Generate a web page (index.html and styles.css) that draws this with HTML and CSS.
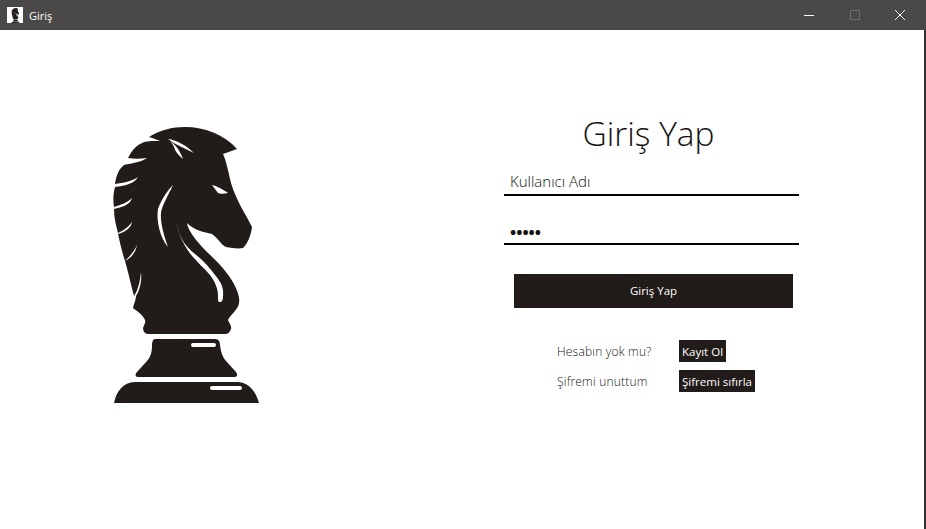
FILE: index.html
```html
<!DOCTYPE html>
<html lang="tr">
<head>
<meta charset="utf-8">
<title>Giriş</title>
<link rel="stylesheet" href="styles.css">
</head>
<body>
<svg class="defs" width="0" height="0" aria-hidden="true">
  <symbol id="knight" viewBox="113 127 146 276">
    <path class="ink" d="M149 137 C160 130 172 127 185 127 C205 127 225 135 237 149 L223 154 C226 160 228 170 231 183 C236 200 245 213 252 227 C251 235 248 243 243 248 C238 249 232 248 226 247 C221 245 218 238 212 234 C204 232 195 231 187 223 C188 232 200 245 208 253 C218 262 228 273 234 284 C238 292 240 298 239 303 C238 310 231 314 228 320 C229 323 232 326 231 329 C230 332 228 334 225 334 L148 334 C145 334 143 331 143 328 C144 325 146 323 145 320 C143 315 137 311 133 308 C134 303 136 300 136 296 C140 290 142 280 141 272 C140 282 138 290 134 296 C131 285 129 275 125 261 C131 258 136 252 137 245 C134 252 129 257 125 261 C122 252 120 243 118 234 C125 232 131 228 132 222 C128 228 122 231 118 233 C116 225 114 218 114 209 C122 207 130 205 132 198 C127 203 120 205 114 207 C113 200 113 195 115 187 C124 186 134 184 138 177 C132 181 123 183 115 184 C116 177 118 170 124 165 C132 163 142 162 147 158 C140 159 134 159 128 158 C132 150 137 145 142 143 C146 141 152 141 160 141 C156 139 152 138 149 137 Z"/>
    <path class="ink" d="M155 339 L215 339 C219 339 220 342 220 345 C221 352 222 356 226 361 L236 372 C238 375 237 377 234 377 L138 377 C135 377 135 374 137 372 L147 361 C151 356 152 352 152 345 C152 342 153 339 155 339 Z"/>
    <path class="ink" d="M114 403 C116 392 123 382 135 382 L237 382 C249 382 256 392 259 403 Z"/>
    <path class="shine" d="M176 221 C178 232 182 240 185 244 C191 252 197 255 202 260 C209 267 212 271 215 275 C221 282 224 288 223 296 C223 300 222 302 220 302 C218 302 218 300 218 296 C218 288 215 282 210 275 C204 268 198 263 193 257 C186 249 178 235 176 221 Z"/>
    <path class="shine" d="M173 185 C168 190 162 198 158 209 C156 220 160 238 168 247 C164 236 160 222 161 213 C162 205 169 194 173 185 Z"/>
    <path class="shine" d="M212 185 C217 186 224 190 228 193 C224 194 220 194 218 193 C216 190 214 188 212 185 Z"/>
    <path class="shine" d="M168 139 C176 140 186 145 194 153 C186 149 176 145 168 139 Z"/>
    <path class="shine" d="M170 141 C176 145 180 151 183 159 C178 155 175 151 174 147 C173 145 172 143 170 141 Z"/>
    <rect class="shine" x="191" y="343" width="25" height="4" rx="2"/>
    <rect class="shine" x="210" y="386" width="32" height="4" rx="2"/>
  </symbol>
</svg>
<div class="window">
  <header class="titlebar">
    <span class="app-icon"><svg class="app-knight"><use href="#knight"/></svg></span>
    <span class="app-title">Giriş</span>
    <div class="controls">
      <span class="control"><svg width="10" height="10" viewBox="0 0 10 10"><path class="glyph" d="M0 5.5H10"/></svg></span>
      <span class="control"><svg width="10" height="10" viewBox="0 0 10 10"><rect class="glyph-off" x="0.5" y="0.5" width="9" height="9"/></svg></span>
      <span class="control"><svg width="10" height="10" viewBox="0 0 10 10"><path class="glyph" d="M0 0L10 10M10 0L0 10"/></svg></span>
    </div>
  </header>
  <main class="main">
    <div class="hero"><svg class="hero-knight"><use href="#knight"/></svg></div>
    <form class="login">
      <h1 class="heading">Giriş Yap</h1>
      <input class="field" type="text" value="Kullanıcı Adı">
      <input class="field field-pass" type="password" value="12345">
      <button class="submit" type="button">Giriş Yap</button>
      <div class="links">
        <div class="link-row"><span class="link-label">Hesabın yok mu?</span><button class="chip" type="button">Kayıt Ol</button></div>
        <div class="link-row"><span class="link-label">Şifremi unuttum</span><button class="chip" type="button">Şifremi sıfırla</button></div>
      </div>
    </form>
  </main>
</div>
</body>
</html>
```

FILE: styles.css
```css
* { box-sizing: border-box; }
html, body { margin: 0; height: 100%; overflow: hidden; background: #fff; }
body { font-family: "Open Sans", "Noto Sans", sans-serif; color: #1f1b18; }
.defs { position: absolute; }
.ink { fill: #211c19; }
.shine { fill: #fff; }

.window { height: 529px; display: flex; flex-direction: column; border-right: 2px solid #333; }

.titlebar { height: 30px; flex: none; display: flex; align-items: center; background: #4a4947; color: #fff; padding-left: 7px; margin-right: -2px; }
.app-icon { width: 16px; height: 16px; background: #fff; display: flex; justify-content: center; align-items: center; }
.app-knight { width: 9px; height: 15px; }
.app-title { font-size: 11px; margin-left: 6px; }
.controls { margin-left: auto; display: flex; margin-right: 3px; }
.control { width: 45.5px; height: 30px; display: flex; align-items: center; justify-content: center; }
.glyph { stroke: #fff; stroke-width: 1; fill: none; }
.glyph-off { stroke: #6e6d6b; stroke-width: 1; fill: none; }

.main { flex: 1; display: flex; }
.hero { width: 504px; padding: 97px 0 0 113px; flex: none; }
.hero-knight { display: block; width: 146px; height: 276px; }

.login { width: 295px; display: flex; flex-direction: column; }
.heading { margin: 81px 0 0; padding-right: 6px; height: 44px; line-height: 44px; font-size: 33.5px; font-weight: 300; text-align: center; color: #14110f; }
.field { display: block; width: 295px; height: 28px; margin-top: 13px; padding: 0 6px; border: 0; border-bottom: 2px solid #000; outline: 0; background: transparent; font: 300 15px "Open Sans", sans-serif; color: #14110f; }
.field-pass { margin-top: 21px; padding-top: 3px; font-size: 16.5px; font-weight: 700; }
.submit { width: 279px; height: 34px; margin: 29px 0 0 10px; border: 0; padding: 0 0 2px; background: #211c19; color: #fff; font: 11.5px "Open Sans", sans-serif; }
.links { margin: 32px 0 0 53px; display: flex; flex-direction: column; gap: 8px; }
.link-row { display: flex; align-items: center; height: 22px; }
.link-label { width: 122px; font-size: 12px; font-weight: 300; letter-spacing: 0.2px; color: #14110f; }
.chip { height: 22px; padding: 0 3px; border: 0; background: #211c19; color: #fff; font: 11.5px "Open Sans", sans-serif; }
```
